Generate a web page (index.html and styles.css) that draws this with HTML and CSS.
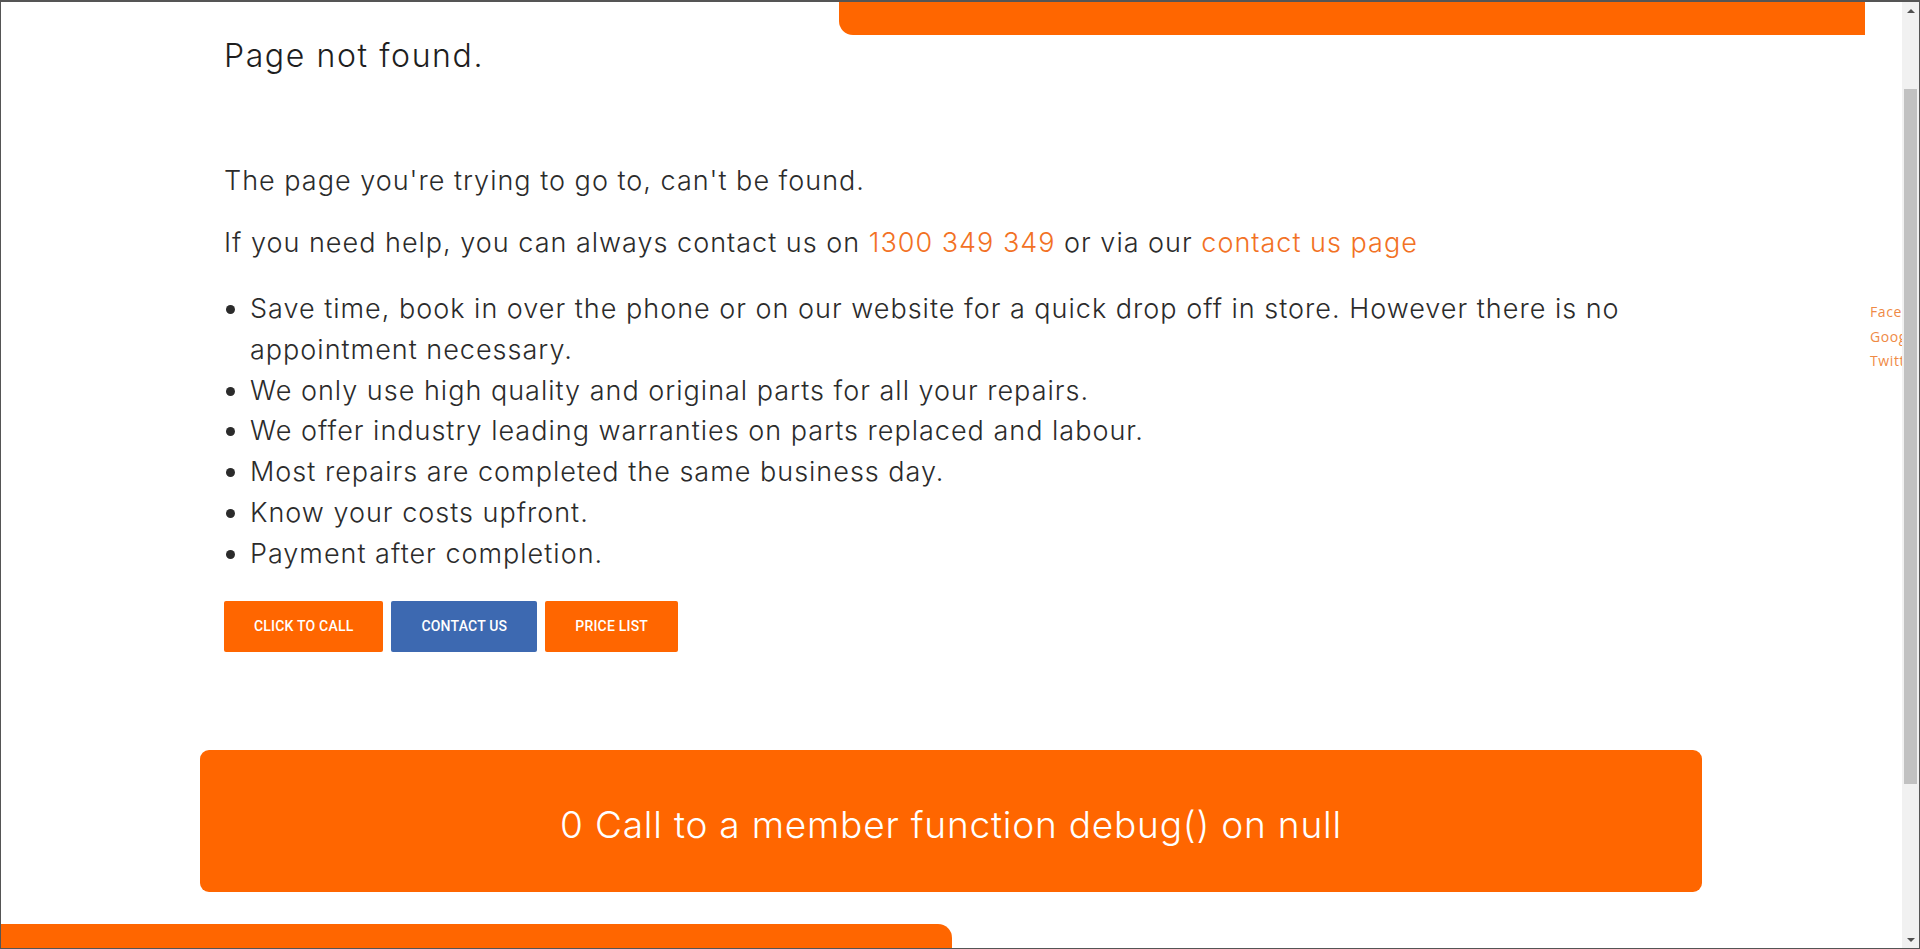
FILE: index.html
```html
<!DOCTYPE html>
<html lang="en">
<head>
<meta charset="utf-8">
<title>Page not found</title>
<link rel="stylesheet" href="styles.css">
</head>
<body>
<div class="window">
  <div class="page">
    <div class="topbar"></div>
    <main class="content">
      <h1 class="title">Page not found.</h1>
      <p class="text">The page you're trying to go to, can't be found.</p>
      <p class="text">If you need help, you can always contact us on <a class="link" href="#">1300 349 349</a> or via our <a class="link" href="#">contact us page</a></p>
      <ul class="perks">
        <li>Save time, book in over the phone or on our website for a quick drop off in store. However there is no appointment necessary.</li>
        <li>We only use high quality and original parts for all your repairs.</li>
        <li>We offer industry leading warranties on parts replaced and labour.</li>
        <li>Most repairs are completed the same business day.</li>
        <li>Know your costs upfront.</li>
        <li>Payment after completion.</li>
      </ul>
      <div class="buttons">
        <a class="btn btn-orange" href="#">CLICK TO CALL</a>
        <a class="btn btn-blue" href="#">CONTACT US</a>
        <a class="btn btn-orange" href="#">PRICE LIST</a>
      </div>
    </main>
    <div class="error">0 Call to a member function debug() on null</div>
    <div class="footbar"></div>
    <ul class="social">
      <li><a href="#">Facebook</a></li>
      <li><a href="#">Google</a></li>
      <li><a href="#">Twitter</a></li>
    </ul>
  </div>
  <div class="scrollbar">
    <div class="arrow arrow-up"></div>
    <div class="track"><div class="thumb"></div></div>
    <div class="arrow arrow-down"></div>
  </div>
</div>
</body>
</html>
```
FILE: styles.css
```css
* { box-sizing: border-box; }
html, body { margin: 0; padding: 0; background: #fff; }
body { font-family: Inter, "Noto Sans", sans-serif; color: #2b2b2b; }

.window {
  width: 1920px;
  height: 949px;
  border: 1px solid #555;
  border-top-width: 2px;
  display: flex;
  overflow: hidden;
}

.page {
  flex: 1;
  position: relative;
  overflow: hidden;
  display: flex;
  flex-direction: column;
}

.topbar {
  margin-left: 838px;
  width: 1026px;
  height: 33px;
  flex: none;
  background: #ff6600;
  border-bottom-left-radius: 14px;
}

.content { padding-left: 223px; padding-right: 200px; }

.title {
  margin: 3px 0 0;
  font-size: 32px;
  line-height: 36px;
  font-weight: 300;
  letter-spacing: 1.6px;
  color: #1e1e1e;
}

.text {
  margin: 86px 0 0;
  font-size: 27px;
  line-height: 41px;
  font-weight: 300;
  letter-spacing: 1px;
}
.text + .text { margin-top: 21px; }

.link { color: #f27124; text-decoration: none; }

.perks {
  margin: 26px 0 0;
  padding-left: 26px;
  font-size: 27px;
  line-height: 40.8px;
  font-weight: 300;
  letter-spacing: 1px;
  max-width: 1440px;
}

.buttons {
  display: flex;
  gap: 8px;
  margin-top: 26px;
}

.btn {
  display: flex;
  align-items: center;
  justify-content: center;
  height: 51px;
  padding: 0 30px;
  font-family: Roboto, "Liberation Sans", sans-serif;
  font-size: 14px;
  font-weight: 500;
  letter-spacing: 0.2px;
  color: #fff;
  text-decoration: none;
  border-radius: 2px;
}
.btn-orange { background: #ff6600; }
.btn-blue { background: #3d69b1; }

.error {
  margin: 98px 0 0 199px;
  width: 1502px;
  height: 142px;
  flex: none;
  padding-top: 7px;
  background: #ff6600;
  border-radius: 9px;
  color: #fff;
  font-size: 37px;
  font-weight: 300;
  letter-spacing: 0.8px;
  display: flex;
  align-items: center;
  justify-content: center;
}

.footbar {
  margin-top: auto;
  width: 951px;
  height: 24px;
  flex: none;
  background: #ff6600;
  border-top-right-radius: 14px;
}

.social {
  position: absolute;
  left: 1869px;
  top: 298px;
  margin: 0;
  padding: 0;
  list-style: none;
  font-family: "Open Sans", sans-serif;
  font-size: 14px;
  line-height: 24.5px;
  letter-spacing: 0.6px;
  white-space: nowrap;
}
.social a { color: #ef8a45; text-decoration: none; }

.scrollbar {
  width: 17px;
  flex: none;
  background: #f1f1f1;
  display: flex;
  flex-direction: column;
}
.arrow {
  height: 17px;
  flex: none;
  display: flex;
  align-items: center;
  justify-content: center;
}
.arrow::before {
  content: "";
  width: 0;
  height: 0;
  border-left: 4px solid transparent;
  border-right: 4px solid transparent;
}
.arrow-up::before { border-bottom: 4px solid #505050; }
.arrow-down::before { border-top: 4px solid #505050; }
.track { flex: 1; padding: 70px 2px 0; }
.thumb { height: 695px; background: #c1c1c1; }
```
